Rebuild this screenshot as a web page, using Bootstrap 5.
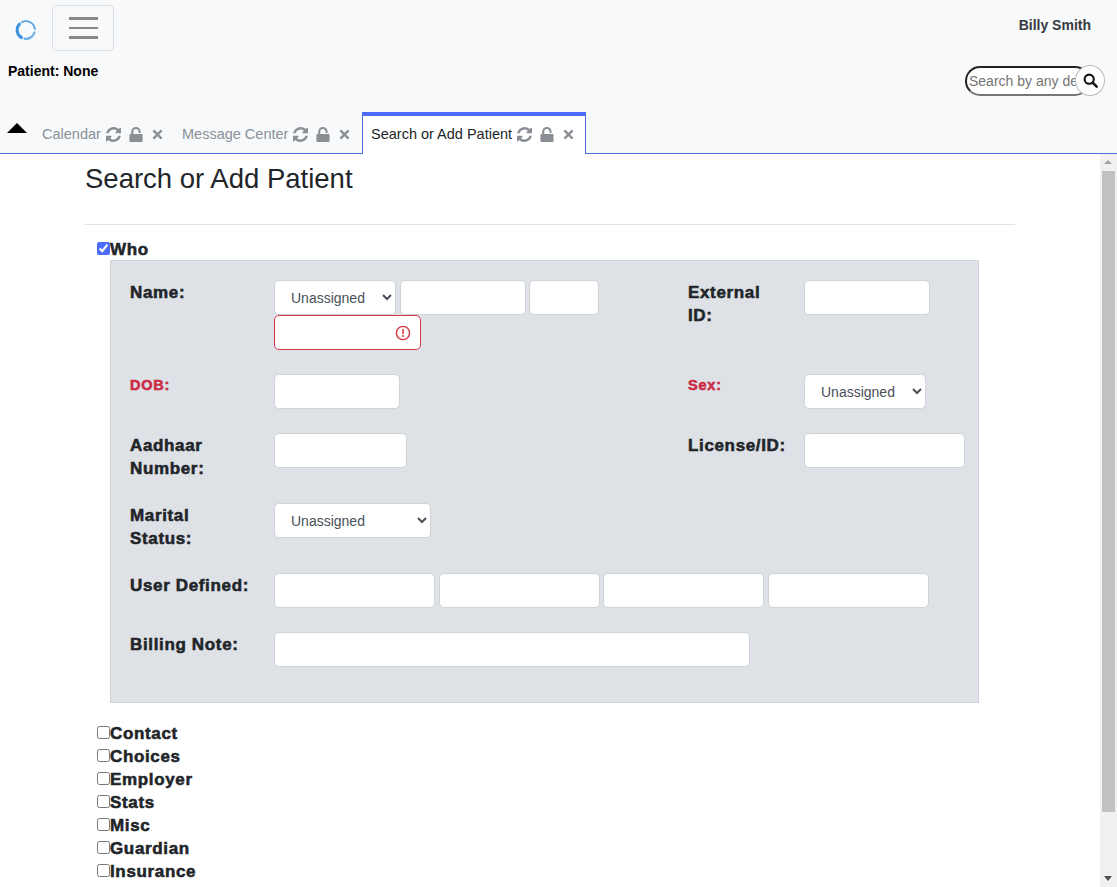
<!DOCTYPE html>
<html lang="en">
<head>
<meta charset="utf-8">
<title>Search or Add Patient</title>
<link rel="stylesheet" href="https://cdn.jsdelivr.net/npm/bootstrap@5.3.0/dist/css/bootstrap.min.css">
<style>
html,body{height:887px;overflow:hidden}
body{font-family:"Liberation Sans",Arial,sans-serif;font-size:14px;color:#212529;background:#fff}
.app-head{height:154px;background:#f8f9fa;border-bottom:1px solid #4f6fd6}
.top-row{height:60px}
.logo-cell{width:52px;padding-left:15px;padding-top:19px}
.burger{width:62px;height:46px;margin-top:5px;border:1px solid #dee1e4;border-radius:4px;background:transparent;padding:0;display:flex;flex-direction:column;justify-content:center;align-items:center;gap:7px}
.burger i{display:block;width:29px;height:2.5px;background:#86888a}
.user-name{font-weight:700;font-size:14px;color:#343a40;padding-top:15px;padding-right:26px;line-height:21px}
.patient-line{font-weight:700;font-size:14px;color:#000;padding-left:8px;line-height:16px;margin-top:3px}
.search-wrap{position:relative;width:140px;height:30px;margin-right:12px;margin-top:-13px}
.search-box{width:125px;height:30px;border:2px solid;border-color:#222 #777 #777 #222;border-radius:15px;padding:0 2px;font-family:inherit;font-size:14px;background:#fff;outline:0;display:block}
.search-box::placeholder{color:#757575;opacity:1}
.search-btn{position:absolute;left:110px;top:-1px;width:30px;height:31px;border-radius:50%;border:1px solid #bbb;background:#fff;padding:0;display:flex;align-items:center;justify-content:center}
.tab-bar{height:42px;margin-top:16px}
.tab-caret{width:0;height:0;border-left:10px solid transparent;border-right:10px solid transparent;border-bottom:10px solid #000;margin:11px 0 0 7px}
.pt-tab{display:flex;align-items:center;height:41px;color:#8a9199;font-size:14.5px;padding-top:3px}
.pt-tab svg{display:block;fill:#8a8f96}
.pt-tab.first{margin-left:15px;width:140px}
.pt-tab.second{width:180px}
.tab-name{margin-right:5px;margin-top:2px}
.ic-a{margin-right:8px}
.ic-b{margin-right:9px}
.pt-tab.active-tab{width:224px;height:42px;color:#212529;background:#fff;border:1px solid #4f6fd6;border-top:4px solid #4a6cf8;border-bottom:0;padding:0 0 2px 8px;margin-bottom:-1px}
.body-row{height:733px}
.scroll-area{flex:1 1 auto;overflow:hidden;padding:0 0 0 85px}
.page-title{font-size:27.5px;font-weight:400;line-height:34px;margin:8px 0 28px;color:#212529;width:930px}
.rule{width:930px;margin:0;border:0;border-top:1px solid #dee2e6;opacity:1}
.sec-list{padding-left:12px;padding-top:13px}
.sec-title{display:flex;align-items:center;height:23px;font-weight:700;font-size:17px;letter-spacing:.65px;-webkit-text-stroke:.55px currentColor;color:#212529;margin:0;line-height:23px}
.sec-title input{width:13px;height:13px;margin:0;accent-color:#4a6cf8;position:relative;top:-1px}
.sec-panel{width:869px;height:443px;margin:-1px 0 19px 13px;background:#dee1e6;border:1px solid #ced4da;padding:19px 0 0 19px}
.frow{display:flex;margin-bottom:24px}
.flabel{width:144px;flex:none;padding:1px 20px 0 0;margin-bottom:-1px;font-weight:700;font-size:17px;letter-spacing:.65px;-webkit-text-stroke:.55px currentColor;line-height:23px;color:#212529}
.flabel.wide{width:116px;padding-right:16px}
.flabel.req{color:#cc2a45;font-size:14.5px;letter-spacing:.8px;padding-top:0;margin-bottom:0}
.fld{height:35px;border:1px solid #ced4da;border-radius:5px;background:#fff;font-family:inherit;font-size:14px;color:#495057;padding:0 12px;outline:0;display:block;margin:0}
select.fld{padding-left:12px;padding-right:2px}
.bad-fld{border-color:#dc3545;width:147px;background:#fff url("data:image/svg+xml,%3Csvg xmlns='http://www.w3.org/2000/svg' viewBox='0 0 16 16'%3E%3Ccircle cx='8' cy='8' r='6.6' fill='none' stroke='%23dc3545' stroke-width='1.4'/%3E%3Crect x='7.2' y='4' width='1.6' height='5' rx='.6' fill='%23dc3545'/%3E%3Ccircle cx='8' cy='11' r='1' fill='%23dc3545'/%3E%3C/svg%3E") no-repeat right 9px center/16px 16px}
.name-fields{width:330px;display:flex;flex-wrap:wrap;column-gap:3.6px;align-content:flex-start}
.ud-fields{display:flex;gap:3.5px}
.fake-scroll{width:17px;flex:none;background:#f1f1f1;position:relative}
.arrow-up,.arrow-dn{position:absolute;left:4px;width:0;height:0;border-left:4px solid transparent;border-right:4px solid transparent}
.arrow-up{top:6px;border-bottom:4px solid #a3a3a3}
.arrow-dn{bottom:6px;border-top:5px solid #505050}
.scroll-thumb{position:absolute;left:2px;top:17px;width:13px;height:641px;background:#c1c1c1}
</style>
</head>
<body>
<header class="app-head">
  <div class="d-flex top-row">
    <div class="logo-cell">
      <svg width="22" height="22" viewBox="0 0 22 22" fill="none" stroke-linecap="round">
        <path d="M7 3.200A8.800 8.800 0 0 1 19.800 10" stroke="#5aa6e3" stroke-width="1.900"/>
        <path d="M4.500 5A8.800 8.800 0 0 0 6.500 18.600" stroke="#3f93dc" stroke-width="3"/>
        <path d="M9.500 19.700A8.800 8.800 0 0 0 19.500 13.500" stroke="#6db0e6" stroke-width="2.200"/>
      </svg>
    </div>
    <button class="burger" type="button" aria-label="Menu"><i></i><i></i><i></i></button>
    <div class="ms-auto user-name">Billy Smith</div>
  </div>
  <div class="patient-line">Patient: None</div>
  <div class="d-flex justify-content-end">
    <div class="search-wrap">
      <input class="search-box" type="text" placeholder="Search by any demographics">
      <button class="search-btn" type="button" aria-label="Search">
        <svg width="15" height="15" viewBox="0 0 16 16"><circle cx="6.600" cy="6.600" r="4.900" fill="none" stroke="#111" stroke-width="2.200"/><path d="M10.300 10.300 14.600 14.600" stroke="#111" stroke-width="2.600" stroke-linecap="round"/></svg>
      </button>
    </div>
  </div>
  <div class="d-flex tab-bar">
    <div class="tab-caret"></div>
    <div class="pt-tab first">
      <span class="tab-name">Calendar</span>
      <svg class="ic-a" width="15" height="15" viewBox="0 0 1536 1536"><use href="#i-sync"/></svg>
      <svg class="ic-b" width="14" height="15" viewBox="0 0 14 16"><use href="#i-lock"/></svg>
      <svg width="11" height="11" viewBox="0 0 12 12"><use href="#i-x"/></svg>
    </div>
    <div class="pt-tab second">
      <span class="tab-name">Message Center</span>
      <svg class="ic-a" width="15" height="15" viewBox="0 0 1536 1536"><use href="#i-sync"/></svg>
      <svg class="ic-b" width="14" height="15" viewBox="0 0 14 16"><use href="#i-lock"/></svg>
      <svg width="11" height="11" viewBox="0 0 12 12"><use href="#i-x"/></svg>
    </div>
    <div class="pt-tab active-tab">
      <span class="tab-name">Search or Add Patient</span>
      <svg class="ic-a" width="15" height="15" viewBox="0 0 1536 1536"><use href="#i-sync"/></svg>
      <svg class="ic-b" width="14" height="15" viewBox="0 0 14 16"><use href="#i-lock"/></svg>
      <svg width="11" height="11" viewBox="0 0 12 12"><use href="#i-x"/></svg>
    </div>
  </div>
</header>
<svg width="0" height="0" class="position-absolute">
  <defs>
    <g id="i-sync"><path d="M1511 928q0 5-1 7-64 268-268 434.500t-478 166.500q-146 0-282.500-55t-243.500-157l-129 129q-19 19-45 19t-45-19-19-45v-448q0-26 19-45t45-19h448q26 0 45 19t19 45-19 45l-137 137q71 66 161 102t187 36q134 0 250-65t186-179q11-17 53-117 8-23 30-23h192q13 0 22.500 9.500t9.500 22.500zm25-800v448q0 26-19 45t-45 19h-448q-26 0-45-19t-19-45 19-45l138-138q-148-137-349-137-134 0-250 65t-186 179q-11 17-53 117-8 23-30 23h-199q-13 0-22.500-9.500t-9.500-22.500v-7q65-268 270-434.500t480-166.500q146 0 284 55.500t245 156.500l130-129q19-19 45-19t45 19 19 45z"/></g>
    <g id="i-lock"><path d="M1 7.500h.9V5a5 5 0 0 1 10 0v1.500H9.700V5a2.800 2.800 0 0 0-5.600 0v2.500H13a1 1 0 0 1 1 1V15a1 1 0 0 1-1 1H1a1 1 0 0 1-1-1V8.500a1 1 0 0 1 1-1Z"/></g>
    <g id="i-x"><path d="M2.400.6 6 4.200 9.600.6l1.800 1.800L7.800 6l3.600 3.600-1.800 1.800L6 7.800l-3.600 3.600L.6 9.600 4.200 6 .6 2.400Z"/></g>
  </defs>
</svg>
<div class="d-flex body-row">
  <main class="scroll-area">
    <h1 class="page-title">Search or Add Patient</h1>
    <hr class="rule">
    <div class="sec-list">
      <label class="sec-title"><input type="checkbox" checked>Who</label>
      <section class="sec-panel">
        <div class="frow">
          <div class="flabel">Name:</div>
          <div class="name-fields">
            <select class="fld" style="width:122px"><option>Unassigned</option></select>
            <input class="fld" style="width:126px" type="text">
            <input class="fld" style="width:70px" type="text">
            <input class="fld bad-fld" type="text">
          </div>
          <div class="d-flex" style="margin-left:84px">
            <div class="flabel wide">External ID:</div>
            <input class="fld" style="width:126px" type="text">
          </div>
        </div>
        <div class="frow">
          <div class="flabel req">DOB:</div>
          <input class="fld" style="width:126px" type="text">
          <div class="d-flex" style="margin-left:288px">
            <div class="flabel wide req">Sex:</div>
            <select class="fld" style="width:122px"><option>Unassigned</option></select>
          </div>
        </div>
        <div class="frow">
          <div class="flabel">Aadhaar Number:</div>
          <input class="fld" style="width:133px" type="text">
          <div class="d-flex" style="margin-left:281px">
            <div class="flabel wide">License/ID:</div>
            <input class="fld" style="width:161px" type="text">
          </div>
        </div>
        <div class="frow">
          <div class="flabel">Marital Status:</div>
          <select class="fld" style="width:157px"><option>Unassigned</option></select>
        </div>
        <div class="frow">
          <div class="flabel">User Defined:</div>
          <div class="ud-fields">
            <input class="fld" style="width:161px" type="text">
            <input class="fld" style="width:161px" type="text">
            <input class="fld" style="width:161px" type="text">
            <input class="fld" style="width:161px" type="text">
          </div>
        </div>
        <div class="frow">
          <div class="flabel">Billing Note:</div>
          <input class="fld" style="width:476px" type="text">
        </div>
      </section>
      <label class="sec-title"><input type="checkbox">Contact</label>
      <label class="sec-title"><input type="checkbox">Choices</label>
      <label class="sec-title"><input type="checkbox">Employer</label>
      <label class="sec-title"><input type="checkbox">Stats</label>
      <label class="sec-title"><input type="checkbox">Misc</label>
      <label class="sec-title"><input type="checkbox">Guardian</label>
      <label class="sec-title"><input type="checkbox">Insurance</label>
    </div>
  </main>
  <div class="fake-scroll"><div class="arrow-up"></div><div class="scroll-thumb"></div><div class="arrow-dn"></div></div>
</div>
<script src="https://cdn.jsdelivr.net/npm/bootstrap@5.3.0/dist/js/bootstrap.bundle.min.js"></script>
</body>
</html>
